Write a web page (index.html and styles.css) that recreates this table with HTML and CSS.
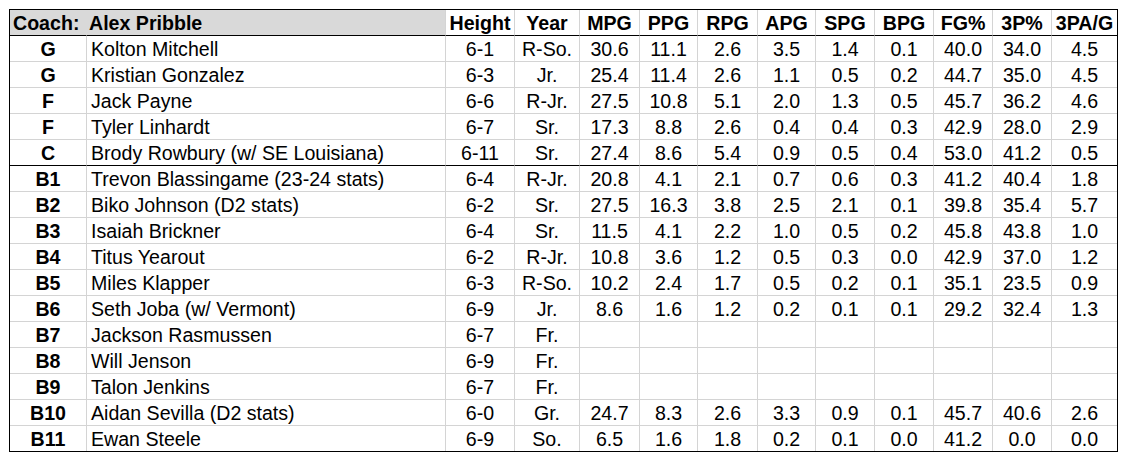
FILE: index.html
```
<!DOCTYPE html>
<html>
<head>
<meta charset="utf-8">
<link rel="stylesheet" href="styles.css">
</head>
<body>
<div class="wrap">
<table class="roster">
  <thead>
    <tr>
      <th class="c-pos coach">Coach:</th>
      <th class="c-name coach name">Alex Pribble</th>
      <th class="c-ht">Height</th>
      <th class="c-yr">Year</th>
      <th class="c-mpg">MPG</th>
      <th class="c-ppg">PPG</th>
      <th class="c-rpg">RPG</th>
      <th class="c-apg">APG</th>
      <th class="c-spg">SPG</th>
      <th class="c-bpg">BPG</th>
      <th class="c-fg">FG%</th>
      <th class="c-3p">3P%</th>
      <th class="c-3pa">3PA/G</th>
    </tr>
  </thead>
  <tbody>
    <tr><td class="pos">G</td><td class="name">Kolton Mitchell</td><td>6-1</td><td>R-So.</td><td>30.6</td><td>11.1</td><td>2.6</td><td>3.5</td><td>1.4</td><td>0.1</td><td>40.0</td><td>34.0</td><td>4.5</td></tr>
    <tr><td class="pos">G</td><td class="name">Kristian Gonzalez</td><td>6-3</td><td>Jr.</td><td>25.4</td><td>11.4</td><td>2.6</td><td>1.1</td><td>0.5</td><td>0.2</td><td>44.7</td><td>35.0</td><td>4.5</td></tr>
    <tr><td class="pos">F</td><td class="name">Jack Payne</td><td>6-6</td><td>R-Jr.</td><td>27.5</td><td>10.8</td><td>5.1</td><td>2.0</td><td>1.3</td><td>0.5</td><td>45.7</td><td>36.2</td><td>4.6</td></tr>
    <tr><td class="pos">F</td><td class="name">Tyler Linhardt</td><td>6-7</td><td>Sr.</td><td>17.3</td><td>8.8</td><td>2.6</td><td>0.4</td><td>0.4</td><td>0.3</td><td>42.9</td><td>28.0</td><td>2.9</td></tr>
    <tr class="split"><td class="pos">C</td><td class="name">Brody Rowbury (w/ SE Louisiana)</td><td>6-11</td><td>Sr.</td><td>27.4</td><td>8.6</td><td>5.4</td><td>0.9</td><td>0.5</td><td>0.4</td><td>53.0</td><td>41.2</td><td>0.5</td></tr>
    <tr><td class="pos">B1</td><td class="name">Trevon Blassingame (23-24 stats)</td><td>6-4</td><td>R-Jr.</td><td>20.8</td><td>4.1</td><td>2.1</td><td>0.7</td><td>0.6</td><td>0.3</td><td>41.2</td><td>40.4</td><td>1.8</td></tr>
    <tr><td class="pos">B2</td><td class="name">Biko Johnson (D2 stats)</td><td>6-2</td><td>Sr.</td><td>27.5</td><td>16.3</td><td>3.8</td><td>2.5</td><td>2.1</td><td>0.1</td><td>39.8</td><td>35.4</td><td>5.7</td></tr>
    <tr><td class="pos">B3</td><td class="name">Isaiah Brickner</td><td>6-4</td><td>Sr.</td><td>11.5</td><td>4.1</td><td>2.2</td><td>1.0</td><td>0.5</td><td>0.2</td><td>45.8</td><td>43.8</td><td>1.0</td></tr>
    <tr><td class="pos">B4</td><td class="name">Titus Yearout</td><td>6-2</td><td>R-Jr.</td><td>10.8</td><td>3.6</td><td>1.2</td><td>0.5</td><td>0.3</td><td>0.0</td><td>42.9</td><td>37.0</td><td>1.2</td></tr>
    <tr><td class="pos">B5</td><td class="name">Miles Klapper</td><td>6-3</td><td>R-So.</td><td>10.2</td><td>2.4</td><td>1.7</td><td>0.5</td><td>0.2</td><td>0.1</td><td>35.1</td><td>23.5</td><td>0.9</td></tr>
    <tr><td class="pos">B6</td><td class="name">Seth Joba (w/ Vermont)</td><td>6-9</td><td>Jr.</td><td>8.6</td><td>1.6</td><td>1.2</td><td>0.2</td><td>0.1</td><td>0.1</td><td>29.2</td><td>32.4</td><td>1.3</td></tr>
    <tr><td class="pos">B7</td><td class="name">Jackson Rasmussen</td><td>6-7</td><td>Fr.</td><td></td><td></td><td></td><td></td><td></td><td></td><td></td><td></td><td></td></tr>
    <tr><td class="pos">B8</td><td class="name">Will Jenson</td><td>6-9</td><td>Fr.</td><td></td><td></td><td></td><td></td><td></td><td></td><td></td><td></td><td></td></tr>
    <tr><td class="pos">B9</td><td class="name">Talon Jenkins</td><td>6-7</td><td>Fr.</td><td></td><td></td><td></td><td></td><td></td><td></td><td></td><td></td><td></td></tr>
    <tr><td class="pos">B10</td><td class="name">Aidan Sevilla (D2 stats)</td><td>6-0</td><td>Gr.</td><td>24.7</td><td>8.3</td><td>2.6</td><td>3.3</td><td>0.9</td><td>0.1</td><td>45.7</td><td>40.6</td><td>2.6</td></tr>
    <tr><td class="pos">B11</td><td class="name">Ewan Steele</td><td>6-9</td><td>So.</td><td>6.5</td><td>1.6</td><td>1.8</td><td>0.2</td><td>0.1</td><td>0.0</td><td>41.2</td><td>0.0</td><td>0.0</td></tr>
  </tbody>
</table>
</div>
</body>
</html>
```
FILE: styles.css
```
html, body {
  margin: 0;
  padding: 0;
  background: #ffffff;
}

.wrap {
  padding: 9px 0 0 9px;
}

.roster {
  border-collapse: separate;
  border-spacing: 0;
  table-layout: fixed;
  width: 1109px;
  border: 1px solid #000000;
  font-family: "Liberation Sans", Arial, sans-serif;
  font-size: 19.6px;
  color: #000000;
}

.roster th,
.roster td {
  box-sizing: border-box;
  height: 26px;
  padding: 0;
  line-height: 21px;
  vertical-align: bottom;
  text-align: center;
  white-space: nowrap;
  overflow: hidden;
  border-right: 1px solid #d4d4d4;
  border-bottom: 1px solid #d4d4d4;
}

.roster th:last-child,
.roster td:last-child {
  border-right: none;
}

.roster th {
  font-weight: bold;
  border-bottom-color: #000000;
  padding-bottom: 1px;
}

.roster th.coach {
  background: #d9d9d9;
  text-align: left;
}

.roster th.c-pos {
  border-right-color: #d9d9d9;
  padding-left: 3px;
}

.roster th.name {
  padding-left: 2px;
}

.c-pos { width: 77px; }
.c-name { width: 359px; }
.c-ht { width: 69px; }
.c-yr { width: 65px; }
.c-mpg { width: 60px; }
.c-ppg { width: 58px; }
.c-rpg { width: 60px; }
.c-apg { width: 58px; }
.c-spg { width: 59px; }
.c-bpg { width: 59px; }
.c-fg { width: 59px; }
.c-3p { width: 59px; }
.c-3pa { width: 65px; }

.roster td {
  padding-bottom: 1px;
}

.roster td.pos {
  font-weight: bold;
}

.roster td.name {
  text-align: left;
  padding-left: 4px;
}

.roster tr.split td {
  border-bottom-color: #000000;
}

.roster tbody tr:last-child td {
  border-bottom: none;
  height: 25px;
}
```
